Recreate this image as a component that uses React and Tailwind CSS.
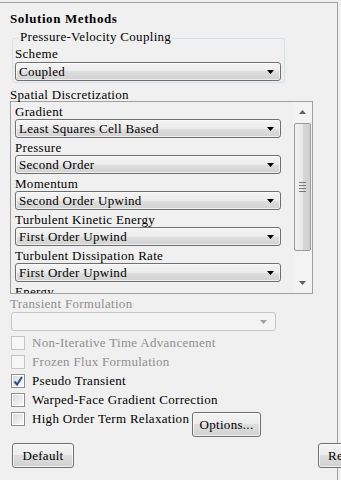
import React from "react";

const ROWS = [
  ["Gradient", "Least Squares Cell Based"],
  ["Pressure", "Second Order"],
  ["Momentum", "Second Order Upwind"],
  ["Turbulent Kinetic Energy", "First Order Upwind"],
  ["Turbulent Dissipation Rate", "First Order Upwind"],
  ["Energy", "Second Order Upwind"],
];

const CHECKS = [
  { label: "Non-Iterative Time Advancement", disabled: true },
  { label: "Frozen Flux Formulation", disabled: true },
  { label: "Pseudo Transient", checked: true },
  { label: "Warped-Face Gradient Correction" },
];

function Caret({ color = "#000" }) {
  return (
    <svg width="7" height="4" viewBox="0 0 7 4" className="shrink-0">
      <polygon points="0,0 7,0 3.5,4" fill={color} />
    </svg>
  );
}

function Select({ value, className = "w-[266px]" }) {
  return (
    <div
      className={`flex h-[19px] shrink-0 items-center justify-between rounded-[3px] border border-[#707070] bg-[linear-gradient(to_bottom,#f4f4f4,#ececec_50%,#dedede_50%,#d2d2d2)] pl-[3px] pr-[6px] leading-[17px] shadow-[inset_0_0_0_1px_rgba(255,255,255,0.6)] ${className}`}
    >
      <span className="whitespace-nowrap">{value}</span>
      <Caret />
    </div>
  );
}

function Checkbox({ checked, disabled }) {
  return (
    <div
      className={`flex size-[14px] shrink-0 items-center justify-center border ${
        disabled
          ? "border-[#c4c4c4] bg-[#f7f7f7]"
          : "border-[#8e8f8f] bg-[linear-gradient(135deg,#d6d8db,#fbfbfb)] shadow-[inset_0_0_0_1px_#ffffff]"
      }`}
    >
      {checked && (
        <svg width="12" height="12" viewBox="0 0 12 12">
          <path d="M2.5 6.5 L5 9.5 L10 2" fill="none" stroke="#2c4f94" strokeWidth="2" />
        </svg>
      )}
    </div>
  );
}

function Button({ children, className = "" }) {
  return (
    <div
      className={`flex h-[25px] shrink-0 items-center rounded-[3px] border border-[#707070] bg-[linear-gradient(to_bottom,#f4f4f4,#ececec_50%,#dedede_50%,#d2d2d2)] leading-[16px] shadow-[inset_0_0_0_1px_rgba(255,255,255,0.7)] ${className}`}
    >
      {children}
    </div>
  );
}

export default function App() {
  return (
    <div className="relative h-[480px] w-[341px] overflow-hidden bg-[#f0f0f0] [font-family:'Liberation_Serif',serif] text-[13px] leading-[16px] tracking-[0.3px] text-black">
      <div className="mt-[2px] h-[478px] w-[338px] border-t border-r border-[#a0a0a0] pl-[10px]">
        {/* Title */}
        <div className="pt-[8px] font-bold tracking-[0.6px]">Solution Methods</div>

        {/* Pressure-Velocity Coupling group */}
        <div className="relative mt-[11px] ml-[2px] w-[273px] rounded-[3px] border border-[#d5dfe5] pt-[7px] pb-[1px] pl-[2px]">
          <span className="absolute top-[-10px] left-[6px] bg-[#f0f0f0] px-[1px]">
            Pressure-Velocity Coupling
          </span>
          <div>Scheme</div>
          <Select value="Coupled" />
        </div>

        {/* Spatial Discretization */}
        <div className="h-[18px] pt-[6px] leading-[12px]">Spatial Discretization</div>
        <div className="flex h-[193px] w-[303px] border border-[#a0a0a0]">
          <div className="flex-1 overflow-hidden pl-[4px]">
            {ROWS.map(([label, value]) => (
              <div key={label}>
                <div className="h-[17px] pt-[2px] leading-[15px] whitespace-nowrap">{label}</div>
                <Select value={value} />
              </div>
            ))}
          </div>
          <div className="flex w-[19px] flex-col items-center bg-[#f3f3f3]">
            <div className="flex h-[20px] items-center">
              <svg width="7" height="4" viewBox="0 0 7 4">
                <polygon points="3.5,0 7,4 0,4" fill="#606060" />
              </svg>
            </div>
            <div className="mt-[1px] flex h-[128px] w-[17px] flex-col items-center justify-center gap-[2px] rounded-[2px] border border-[#9a9a9a] bg-[linear-gradient(to_right,#f2f2f2,#e8e8e8_50%,#d8d8d8_50%,#cfcfcf)]">
              <div className="h-px w-[7px] bg-[#7a7a7a]" />
              <div className="h-px w-[7px] bg-[#7a7a7a]" />
              <div className="h-px w-[7px] bg-[#7a7a7a]" />
              <div className="h-px w-[7px] bg-[#7a7a7a]" />
            </div>
            <div className="mt-auto flex h-[20px] items-center">
              <Caret color="#606060" />
            </div>
          </div>
        </div>

        {/* Transient Formulation */}
        <div className="h-[18px] pt-[2px] text-[#8f8f8f]">Transient Formulation</div>
        <div className="ml-[1px] flex h-[19px] w-[265px] items-center justify-end rounded-[3px] border border-[#c6c6c6] bg-[#f4f4f4] pr-[8px]">
          <Caret color="#a0a0a0" />
        </div>

        <div className="mt-[2px]">
          {CHECKS.map((c) => (
            <div key={c.label} className="flex h-[19px] items-center gap-[7px] pl-[1px] whitespace-nowrap">
              <Checkbox checked={c.checked} disabled={c.disabled} />
              <span className={c.disabled ? "text-[#8f8f8f]" : ""}>{c.label}</span>
            </div>
          ))}
          <div className="flex h-[19px] items-start">
            <div className="flex h-[19px] w-[182px] items-center gap-[7px] pl-[1px] whitespace-nowrap">
              <Checkbox />
              <span>High Order Term Relaxation</span>
            </div>
            <Button className="mt-[3px] h-[24px] w-[69px] justify-center">Options...</Button>
          </div>
        </div>

        {/* Bottom buttons */}
        <div className="mt-[15px] flex">
          <Button className="ml-[2px] w-[62px] justify-center">Default</Button>
          <Button className="ml-[244px] w-[62px] pl-[9px]">Reset</Button>
        </div>
      </div>
    </div>
  );
}
